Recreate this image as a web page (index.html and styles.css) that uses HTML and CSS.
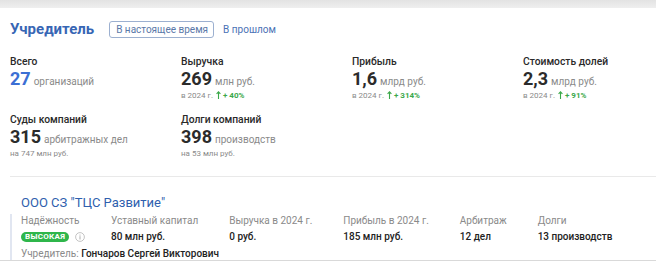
FILE: index.html
```html
<!DOCTYPE html>
<html lang="ru">
<head>
    <meta charset="UTF-8">
    <meta name="viewport" content="width=device-width, initial-scale=1.0">
    <title>Учредитель</title>
    <link rel="stylesheet" href="styles.css">
</head>
<body>
    <div class="topbar"></div>
    <div class="section">
        <div class="header">
            <h2 class="title">Учредитель</h2>
            <span class="tab active">В настоящее время</span>
            <span class="tab">В прошлом</span>
        </div>

        <div class="stats">
            <div class="stat">
                <div class="stat-label">Всего</div>
                <div class="stat-value"><b class="blue">27</b> организаций</div>
            </div>
            <div class="stat">
                <div class="stat-label">Выручка</div>
                <div class="stat-value"><b>269</b> млн руб.</div>
                <div class="stat-sub">в 2024 г. <span class="up"><svg class="arrow" width="5" height="8" viewBox="0 0 5 8"><path d="M2.5 8V1M0.6 2.8L2.5 0.8L4.4 2.8" fill="none" stroke="#3ba84a" stroke-width="1.1"/></svg> + 40%</span></div>
            </div>
            <div class="stat">
                <div class="stat-label">Прибыль</div>
                <div class="stat-value"><b>1,6</b> млрд руб.</div>
                <div class="stat-sub">в 2024 г. <span class="up"><svg class="arrow" width="5" height="8" viewBox="0 0 5 8"><path d="M2.5 8V1M0.6 2.8L2.5 0.8L4.4 2.8" fill="none" stroke="#3ba84a" stroke-width="1.1"/></svg> + 314%</span></div>
            </div>
            <div class="stat">
                <div class="stat-label">Стоимость долей</div>
                <div class="stat-value"><b>2,3</b> млрд руб.</div>
                <div class="stat-sub">в 2024 г. <span class="up"><svg class="arrow" width="5" height="8" viewBox="0 0 5 8"><path d="M2.5 8V1M0.6 2.8L2.5 0.8L4.4 2.8" fill="none" stroke="#3ba84a" stroke-width="1.1"/></svg> + 91%</span></div>
            </div>
            <div class="stat">
                <div class="stat-label">Суды компаний</div>
                <div class="stat-value"><b>315</b> арбитражных дел</div>
                <div class="stat-sub">на 747 млн руб.</div>
            </div>
            <div class="stat">
                <div class="stat-label">Долги компаний</div>
                <div class="stat-value"><b>398</b> производств</div>
                <div class="stat-sub">на 53 млн руб.</div>
            </div>
        </div>

        <div class="company">
            <a class="company-name" href="#">ООО СЗ "ТЦС Развитие"</a>
            <div class="company-body">
                <div class="company-info">
                    <div class="info-col reliability">
                        <div class="info-label">Надёжность</div>
                        <div class="info-value">
                            <span class="badge">ВЫСОКАЯ</span>
                            <svg class="info-icon" width="10" height="10" viewBox="0 0 10 10">
                                <circle cx="5" cy="5" r="4.4" fill="none" stroke="#b5b5b5" stroke-width="0.8"/>
                                <circle cx="5" cy="3" r="0.6" fill="#a5a5a5"/>
                                <rect x="4.55" y="4.2" width="0.9" height="3.3" fill="#a5a5a5"/>
                            </svg>
                        </div>
                    </div>
                    <div class="info-col">
                        <div class="info-label">Уставный капитал</div>
                        <div class="info-value">80 млн руб.</div>
                    </div>
                    <div class="info-col">
                        <div class="info-label">Выручка в 2024 г.</div>
                        <div class="info-value">0 руб.</div>
                    </div>
                    <div class="info-col">
                        <div class="info-label">Прибыль в 2024 г.</div>
                        <div class="info-value">185 млн руб.</div>
                    </div>
                    <div class="info-col">
                        <div class="info-label">Арбитраж</div>
                        <div class="info-value">12 дел</div>
                    </div>
                    <div class="info-col">
                        <div class="info-label">Долги</div>
                        <div class="info-value">13 производств</div>
                    </div>
                </div>
                <div class="founder"><span class="muted">Учредитель:</span> Гончаров Сергей Викторович</div>
            </div>
        </div>
    </div>
    <div class="bottom-line"></div>
</body>
</html>
```
FILE: styles.css
```css
body {
    margin: 0;
    background-color: #fff;
    font-family: 'Roboto', 'Noto Sans', sans-serif;
    color: #222;
    overflow: hidden;
}

.topbar {
    height: 8px;
    background: linear-gradient(#e3e3e3, #efefef);
}

.section {
    padding-left: 10px;
}

/* Header with tabs */
.header {
    display: flex;
    align-items: center;
    height: 20px;
    margin-top: 11px;
}

.title {
    margin: 0 15px 0 0;
    font-size: 15px;
    font-weight: 700;
    color: #3766b4;
}

.tab {
    font-size: 10px;
    color: #4a72b5;
    padding: 1px 5px 1px 6px;
    line-height: 13px;
}

.tab.active {
    border: 1px solid #9cb0d0;
    border-radius: 3px;
    color: #5a78a8;
    margin-right: 3px;
}

/* Summary stats */
.stats {
    display: grid;
    grid-template-columns: repeat(4, 171px);
    row-gap: 11px;
    margin-top: 16px;
}

.stat-label {
    font-size: 10.3px;
    font-weight: 500;
    line-height: 13px;
    color: #2a2a2a;
}

.stat-value {
    display: flex;
    align-items: baseline;
    gap: 3px;
    height: 22px;
    font-size: 10px;
    line-height: 22px;
    color: #8a8a8a;
}

.stat-value b {
    font-size: 18px;
    font-weight: 700;
    color: #2b2b2b;
}

.stat-value b.blue {
    color: #3b6fd4;
}

.stat-sub {
    font-size: 8px;
    line-height: 12px;
    color: #8a8a8a;
}

.up {
    color: #3ba84a;
    font-weight: 700;
}

.arrow {
    vertical-align: -1px;
    margin-left: 1px;
}

/* Company card */
.company {
    border-top: 1px solid #e9e9e9;
    margin-top: 16px;
    padding-top: 17px;
}

.company-name {
    display: block;
    padding-left: 11px;
    font-size: 13px;
    line-height: 18px;
    color: #2f5fae;
    text-decoration: none;
}

.company-body {
    border-left: 2px solid #e1e6f1;
    padding-left: 9px;
    margin-top: 2px;
}

.company-info {
    display: flex;
    gap: 31px;
}

.info-col.reliability {
    flex: none;
    width: 59px;
}

.info-label {
    font-size: 10px;
    line-height: 14px;
    color: #8a8a8a;
}

.info-value {
    display: flex;
    align-items: center;
    gap: 6px;
    height: 15px;
    margin-top: 1px;
    font-size: 10px;
    font-weight: 500;
    color: #222;
}

.badge {
    flex: none;
    background-color: #2fb64b;
    color: #fff;
    font-size: 8px;
    font-weight: 700;
    letter-spacing: 0.3px;
    line-height: 10px;
    padding: 0 4px;
    border-radius: 5px;
}

.info-icon {
    flex: none;
}

.founder {
    margin-top: 4px;
    font-size: 10px;
    line-height: 12px;
    font-weight: 500;
    color: #222;
}

.muted {
    color: #8a8a8a;
    font-weight: 400;
}

.bottom-line {
    border-top: 1px solid #d9d9d9;
}
```
